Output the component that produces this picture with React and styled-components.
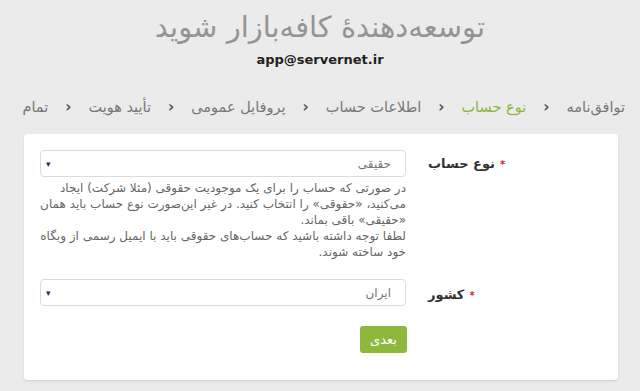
import styled, { createGlobalStyle } from 'styled-components'

const GlobalStyle = createGlobalStyle`
  html, body {
    margin: 0;
    padding: 0;
    background: #ebebeb;
  }
  body {
    font-family: "DejaVu Sans", "Noto Sans", sans-serif;
  }
`

const steps = [
  { title: 'توافق‌نامه' },
  { title: 'نوع حساب', active: true },
  { title: 'اطلاعات حساب' },
  { title: 'پروفایل عمومی' },
  { title: 'تأیید هویت' },
  { title: 'تمام' },
]

const App = () => {
  return (
    <Page dir="rtl">
      <GlobalStyle />
      <Header>
        <Title>توسعه‌دهندهٔ کافه‌بازار شوید</Title>
        <Email>app@servernet.ir</Email>
      </Header>

      <Steps>
        {steps.map((s, i) => (
          <Step key={s.title}>
            <StepName $active={s.active}>{s.title}</StepName>
            {i < steps.length - 1 && <Chevron>‹</Chevron>}
          </Step>
        ))}
      </Steps>

      <Card>
        <FormRow $gap={19}>
          <Label>
            <Star>*</Star>
            نوع حساب
          </Label>
          <Field>
            <Select>
              <SelectText>حقیقی</SelectText>
              <Caret>▾</Caret>
            </Select>
            <Help>
              در صورتی که حساب را برای یک موجودیت حقوقی (مثلا شرکت) ایجاد
              می‌کنید، «حقوقی» را انتخاب کنید. در غیر این‌صورت نوع حساب باید همان
              «حقیقی» باقی بماند.
              <br />
              لطفا توجه داشته باشید که حساب‌های حقوقی باید با ایمیل رسمی از وبگاه
              خود ساخته شوند.
            </Help>
          </Field>
        </FormRow>

        <FormRow $gap={20}>
          <Label $top={8}>
            <Star>*</Star>
            کشور
          </Label>
          <Field>
            <Select>
              <SelectText>ایران</SelectText>
              <Caret>▾</Caret>
            </Select>
          </Field>
        </FormRow>

        <Actions>
          <NextButton type="button">بعدی</NextButton>
        </Actions>
      </Card>
    </Page>
  )
}

export default App

const Page = styled.div`
  width: 640px;
  height: 391px;
  overflow: hidden;
  box-sizing: border-box;
  padding-top: 6px;
`

const Header = styled.div`
  text-align: center;
`

const Title = styled.h1`
  margin: 0;
  font-size: 29px;
  line-height: 42px;
  font-weight: 400;
  color: #949494;
`

const Email = styled.div`
  margin-top: 2px;
  font-size: 13px;
  line-height: 20px;
  font-weight: 700;
  color: #222;
  direction: ltr;
`

const Steps = styled.div`
  display: flex;
  align-items: center;
  margin-top: 25px;
  padding-right: 15px;
  height: 24px;
`

const Step = styled.div`
  display: flex;
  align-items: center;
`

const StepName = styled.span`
  font-size: 14.5px;
  color: ${(p) => (p.$active ? '#8bb53d' : '#777')};
`

const Chevron = styled.span`
  margin: 0 17px;
  font-size: 15px;
  font-weight: 700;
  color: #555;
`

const Card = styled.div`
  margin: 15px 22px 0 24px;
  background: #fff;
  border-radius: 3px;
  box-shadow: 0 1px 2px rgba(0, 0, 0, 0.12);
  padding-top: 16px;
  height: 246px;
  box-sizing: border-box;
`

const FormRow = styled.div`
  display: flex;
  margin-bottom: ${(p) => p.$gap}px;
`

const Label = styled.div`
  width: 212px;
  flex-shrink: 0;
  padding-left: 22px;
  box-sizing: border-box;
  text-align: left;
  padding-top: ${(p) => p.$top ?? 6}px;
  font-size: 13px;
  line-height: 16px;
  font-weight: 700;
  color: #333;
`

const Star = styled.span`
  color: #c9302c;
  font-size: 10px;
  margin-left: 5px;
`

const Field = styled.div`
  width: 366px;
`

const Select = styled.div`
  height: 27px;
  box-sizing: border-box;
  border: 1px solid #dcdcdc;
  border-radius: 4px;
  display: flex;
  align-items: center;
  justify-content: space-between;
  padding: 0 14px 0 5px;
`

const SelectText = styled.span`
  font-size: 12px;
  color: #777;
`

const Caret = styled.span`
  font-size: 9px;
  color: #333;
`

const Help = styled.p`
  margin: 3px 0 0 0;
  font-size: 12px;
  line-height: 16px;
  color: #666;
`

const Actions = styled.div`
  padding-right: 211px;
`

const NextButton = styled.button`
  width: 47px;
  height: 27px;
  border: none;
  border-radius: 3px;
  background: #8db73d;
  color: #fff;
  font-family: inherit;
  font-size: 13px;
  cursor: pointer;
`
